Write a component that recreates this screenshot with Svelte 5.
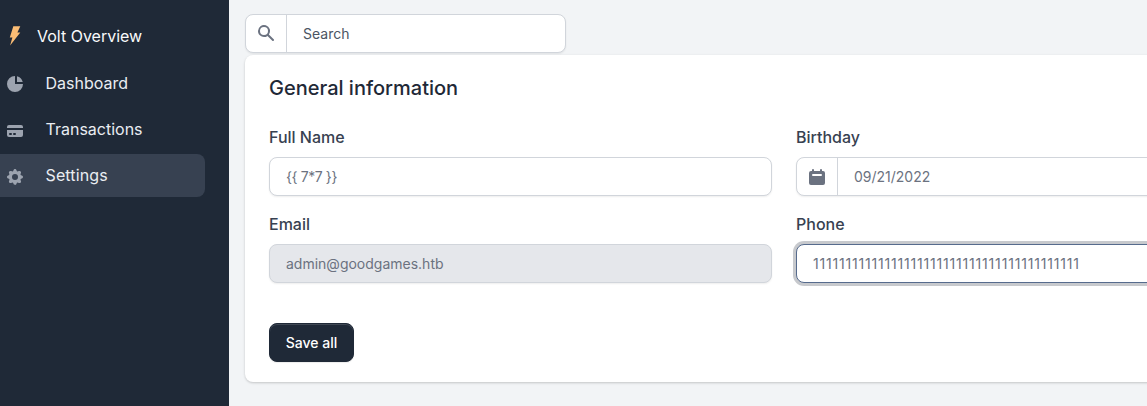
<script>
  const nav = [
    { label: 'Dashboard', paths: ['M2 10a8 8 0 018-8v8h8a8 8 0 11-16 0z', 'M12 2.252A8.014 8.014 0 0117.748 8H12V2.252z'] },
    { label: 'Transactions', paths: ['M4 4a2 2 0 00-2 2v1h16V6a2 2 0 00-2-2H4z', 'M18 9H2v5a2 2 0 002 2h12a2 2 0 002-2V9zM4 13a1 1 0 011-1h1a1 1 0 110 2H5a1 1 0 01-1-1zm5-1a1 1 0 100 2h1a1 1 0 100-2H9z'] },
    { label: 'Settings', active: true, paths: ['M11.49 3.17c-.38-1.56-2.6-1.56-2.98 0a1.532 1.532 0 01-2.286.948c-1.372-.836-2.942.734-2.106 2.106.54.886.061 2.042-.947 2.287-1.561.379-1.561 2.6 0 2.978a1.532 1.532 0 01.947 2.287c-.836 1.372.734 2.942 2.106 2.106a1.532 1.532 0 012.287.947c.379 1.561 2.6 1.561 2.978 0a1.533 1.533 0 012.287-.947c1.372.836 2.942-.734 2.106-2.106a1.533 1.533 0 01.947-2.287c1.561-.379 1.561-2.6 0-2.978a1.532 1.532 0 01-.947-2.287c.836-1.372-.734-2.942-2.106-2.106a1.532 1.532 0 01-2.287-.947zM10 13a3 3 0 100-6 3 3 0 000 6z'] }
  ];
  const phone = '1'.repeat(41);
</script>

<div class="page">
  <nav class="sidebar">
    <a class="brand" href="#overview">
      <svg width="20" height="20" viewBox="0 0 20 20"><path d="M8.3.2h7l-2.9 6.2h2.9L5.1 19.4l2.3-7.8H4.8z" fill="#fbbd75" /></svg>
      <span>Volt Overview</span>
    </a>
    {#each nav as item}
      <a class="item" class:active={item.active} href="#{item.label}">
        <svg width="20" height="20" viewBox="0 0 20 20" fill="currentColor">
          {#each item.paths as d}<path {d} fill-rule="evenodd" clip-rule="evenodd" />{/each}
        </svg>
        <span>{item.label}</span>
      </a>
    {/each}
  </nav>

  <main>
    <div class="group search">
      <span class="addon">
        <svg width="20" height="20" viewBox="0 0 20 20" fill="currentColor"><path fill-rule="evenodd" d="M8 4a4 4 0 100 8 4 4 0 000-8zM2 8a6 6 0 1110.89 3.476l4.817 4.817a1 1 0 01-1.414 1.414l-4.816-4.816A6 6 0 012 8z" clip-rule="evenodd" /></svg>
      </span>
      <input type="text" placeholder="Search" aria-label="Search" />
    </div>

    <section class="card">
      <h2>General information</h2>
      <div class="fields">
        <label>
          <span class="label">Full Name</span>
          <span class="group"><input class="name" type="text" value={'{{ 7*7 }}'} /></span>
        </label>
        <label>
          <span class="label">Birthday</span>
          <span class="group">
            <span class="addon">
              <svg width="20" height="20" viewBox="0 0 20 20" fill="currentColor"><path fill-rule="evenodd" d="M6 2a1 1 0 00-1 1v1H4a2 2 0 00-2 2v10a2 2 0 002 2h12a2 2 0 002-2V6a2 2 0 00-2-2h-1V3a1 1 0 10-2 0v1H7V3a1 1 0 00-1-1zm0 5a1 1 0 000 2h8a1 1 0 100-2H6z" clip-rule="evenodd" /></svg>
            </span>
            <input type="text" value="09/21/2022" />
          </span>
        </label>
        <label>
          <span class="label">Email</span>
          <span class="group disabled"><input type="text" value="admin@goodgames.htb" readonly /></span>
        </label>
        <label>
          <span class="label">Phone</span>
          <span class="group focused"><input class="phone" type="text" value={phone} /></span>
        </label>
      </div>
      <button type="button">Save all</button>
    </section>
  </main>
</div>

<style>
  :global(body) { overflow: hidden; background: #f2f4f6; }
  .page, .page * { box-sizing: border-box; }
  .page {
    display: flex;
    width: 1147px;
    height: 406px;
    overflow: hidden;
    background: #f2f4f6;
    font-family: Inter, sans-serif;
    font-size: 16px;
    line-height: 24px;
    color: #374151;
  }
  svg { display: block; flex: none; }
  .sidebar {
    flex: none;
    width: 229px;
    padding-top: 15px;
    background: #1f2937;
  }
  .sidebar a { display: flex; align-items: center; text-decoration: none; }
  .brand { height: 43px; padding: 0 0 0 5px; gap: 12px; color: #f9fafb; margin-bottom: 4px; }
  .brand svg { margin-top: -2px; }
  .brand span { margin-top: -2px; }
  .item {
    width: 205px;
    height: 43px;
    margin-bottom: 3px;
    padding-left: 5px;
    gap: 20.5px;
    color: #eaedf2;
    border-radius: 0 8px 8px 0;
  }
  .item svg { color: #9ca3af; margin-top: 1px; }
  .item + .item svg { margin-top: 3px; }
  .item span { margin-top: -1px; }
  .active { background: #374151; }
  .active span { letter-spacing: 0.12px; }
  main { flex: none; width: 1100px; padding: 14px 0 0 16px; }
  .group {
    display: flex;
    height: 39px;
    border: 1px solid #d1d5db;
    border-radius: 8px;
    background: #fff;
    box-shadow: 0 1px 2px rgba(0, 0, 0, 0.07);
    overflow: hidden;
  }
  .search { width: 321px; }
  .addon {
    flex: none;
    width: 41px;
    display: flex;
    align-items: center;
    justify-content: center;
    border-right: 1px solid #d1d5db;
    color: #6b7280;
  }
  .addon svg { margin-top: 1px; }
  .search .addon svg { margin-top: -1px; }
  input {
    flex: 1;
    min-width: 0;
    padding: 0 16px;
    border: 0;
    outline: 0;
    background: transparent;
    font: 400 14px/21px Inter, sans-serif;
    color: #6b7280;
  }
  input::placeholder { color: #4b5563; opacity: 1; }
  .name { letter-spacing: -0.4px; }
  .phone { letter-spacing: 0.81px; }
  .disabled { background: #e5e7eb; }
  .focused {
    border-color: #566b8d;
    box-shadow: 0 0 0 3px rgba(31, 41, 55, 0.25);
  }
  .card {
    height: 327px;
    margin-top: 2px;
    padding: 20px 24px 0;
    border-radius: 8px;
    background: #fff;
    box-shadow: 0 1px 3px rgba(0, 0, 0, 0.12), 0 1px 2px rgba(0, 0, 0, 0.08);
  }
  h2 { margin: 0 0 24px; font-size: 20px; line-height: 26px; font-weight: 500; color: #1f2937; }
  .fields { display: grid; grid-template-columns: 503px 503px; gap: 16px 24px; }
  label { display: block; }
  .label { display: block; margin-bottom: 8px; font-weight: 500; }
  button {
    display: block;
    width: 85px;
    height: 39px;
    margin-top: 40px;
    padding: 0;
    border: 1px solid #1f2937;
    border-radius: 8px;
    background: #1f2937;
    color: #fff;
    font: 500 14px/21px Inter, sans-serif;
    box-shadow: inset 0 1px 0 rgba(255, 255, 255, 0.15), 0 1px 1px rgba(0, 0, 0, 0.075);
  }
</style>
